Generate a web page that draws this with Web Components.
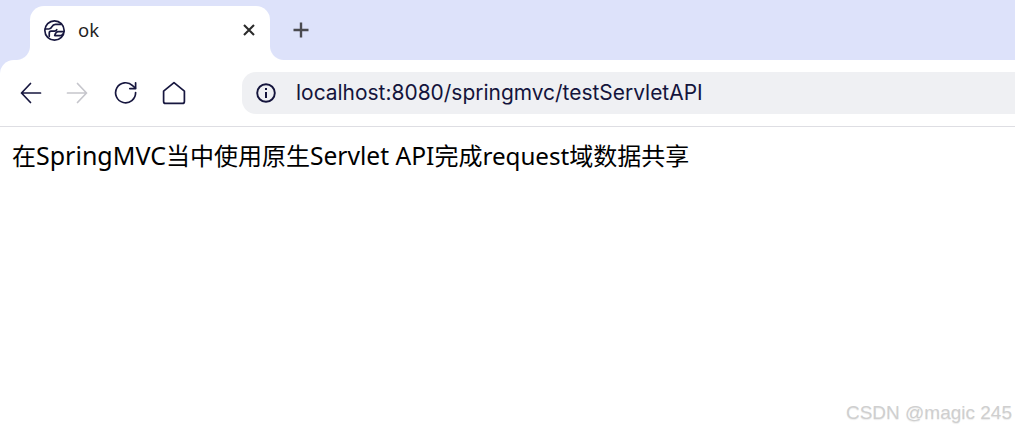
<!DOCTYPE html>
<html>
<head>
<meta charset="utf-8">
<style>
  html, body { margin: 0; padding: 0; background: #fff; overflow: hidden; }
  body { width: 1015px; height: 430px; position: relative; }
  page-body span { font-size: 25px; }
  page-body span.mid { font-size: 24.6px; }
  page-body span.req { font-size: 24.2px; }
</style>
</head>
<body>
<browser-window>
  <tab-strip slot="strip" title-text="ok"></tab-strip>
  <nav-toolbar slot="toolbar" url="localhost:8080/springmvc/testServletAPI"></nav-toolbar>
  <page-body>在<span>SpringMVC</span>当中使用原生<span class="mid">Servlet API</span>完成<span class="req">request</span>域数据共享</page-body>
</browser-window>
<water-mark>CSDN @magic 245</water-mark>

<script>
class BrowserWindow extends HTMLElement {
  constructor() {
    super();
    this.attachShadow({ mode: "open" });
    this.shadowRoot.innerHTML = `
      <style>
        :host { display: flex; flex-direction: column; width: 1015px; height: 430px; }
      </style>
      <slot name="strip"></slot>
      <slot name="toolbar"></slot>
      <slot></slot>
    `;
  }
}

class TabStrip extends HTMLElement {
  constructor() {
    super();
    this.attachShadow({ mode: "open" });
    this.shadowRoot.innerHTML = `
      <style>
        :host { display: flex; height: 60px; box-sizing: border-box; padding: 6px 0 0 30px; background: #dde2fa; align-items: stretch; }
        #tab {
          position: relative; width: 240px; box-sizing: border-box; background: #fff;
          border-radius: 14px 14px 0 0; display: flex; align-items: center; padding: 0 14px 6px;
        }
        #tab::before, #tab::after {
          content: ""; position: absolute; bottom: 0; width: 14px; height: 14px;
          background: radial-gradient(circle at var(--cx) 0, #dde2fa 13.5px, #fff 14.5px);
        }
        #tab::before { left: -14px; --cx: 0; }
        #tab::after { right: -14px; --cx: 100%; }
        #fav { width: 21px; height: 21px; flex: none; }
        #title { margin-left: 13px; flex: 1; font: 18.5px/24px "Noto Sans", sans-serif; color: #1f1f1f; }
        #close { width: 14px; height: 14px; flex: none; }
        #plus { width: 16px; height: 16px; flex: none; margin: 16px 0 0 23px; }
      </style>
      <div id="tab">
        <svg id="fav" viewBox="0 0 20 20" fill="none" stroke="#17173f" stroke-width="1.6" stroke-linecap="round" stroke-linejoin="round">
          <circle cx="10" cy="10" r="9.2"/>
          <path d="M1 8.6 H4.6 Q6.6 8.6 7.6 6.4 Q8.6 4.2 11 4.2 H15.6"/>
          <path d="M5 15.4 V12.4 Q5 10.6 6.8 10.6 H10 Q11.6 10.6 12.2 9.2"/>
          <path d="M19 11 H13.6 Q11.2 11 10.2 14.8 H15.6 Q17.4 14.8 17.8 13.4"/>
        </svg>
        <span id="title"></span>
        <svg id="close" viewBox="0 0 14 14" stroke="#2b2b2b" stroke-width="2.1" fill="none">
          <path d="M2 2 L12 12 M12 2 L2 12"/>
        </svg>
      </div>
      <svg id="plus" viewBox="0 0 16 16" stroke="#4a4a4f" stroke-width="2.4" fill="none">
        <path d="M8 0.5 V15.5 M0.5 8 H15.5"/>
      </svg>
    `;
  }
  connectedCallback() {
    this.shadowRoot.getElementById("title").textContent = this.getAttribute("title-text");
  }
}

class NavToolbar extends HTMLElement {
  constructor() {
    super();
    this.attachShadow({ mode: "open" });
    this.shadowRoot.innerHTML = `
      <style>
        :host { display: block; background: #dde2fa; }
        #bar {
          height: 67px; box-sizing: border-box; background: #fff; border-radius: 14px 0 0 0;
          border-bottom: 1px solid #dedee3; display: flex; align-items: center; padding: 0 0 1px 20px;
        }
        svg { flex: none; display: block; }
        #back { width: 22px; height: 22px; }
        #fwd { width: 22px; height: 22px; margin-left: 24px; }
        #reload { width: 24px; height: 24px; margin-left: 26px; }
        #home { width: 24px; height: 24px; margin-left: 24px; }
        #pill {
          margin-left: 56px; flex: 1; height: 42px; border-radius: 14px 0 0 14px; background: #eff0f3;
          display: flex; align-items: center; padding-left: 14px;
        }
        #info { width: 20px; height: 20px; }
        #url { margin-left: 20px; font: 20.95px Inter, sans-serif; color: #14143c; white-space: nowrap; }
      </style>
      <div id="bar">
        <svg id="back" viewBox="0 0 22 22" fill="none" stroke="#17173f" stroke-width="1.7" stroke-linecap="round" stroke-linejoin="round">
          <path d="M1.5 11 H20.5 M10.5 1.5 L1.5 11 L10.5 20.5"/>
        </svg>
        <svg id="fwd" viewBox="0 0 22 22" fill="none" stroke="#c6c6cc" stroke-width="1.7" stroke-linecap="round" stroke-linejoin="round">
          <path d="M1.5 11 H20.5 M11.5 1.5 L20.5 11 L11.5 20.5"/>
        </svg>
        <svg id="reload" viewBox="0 0 24 24" fill="none" stroke="#17173f" stroke-width="1.7" stroke-linecap="round" stroke-linejoin="round">
          <path d="M21.6 11.5 A10 10 0 1 1 18.6 4.6 L21.4 7.2"/>
          <path d="M21.6 1.8 V7.6 H15.8"/>
        </svg>
        <svg id="home" viewBox="0 0 24 24" fill="none" stroke="#17173f" stroke-width="1.7" stroke-linejoin="round">
          <path d="M12 1.6 L22.4 10.2 V20.4 Q22.4 22.4 20.4 22.4 H3.6 Q1.6 22.4 1.6 20.4 V10.2 Z"/>
        </svg>
        <div id="pill">
          <svg id="info" viewBox="0 0 20 20" fill="none" stroke="#14143c" stroke-width="1.9">
            <circle cx="10" cy="10" r="8.8"/>
            <path d="M10 9 V15" stroke-width="2"/>
            <path d="M10 5 V7" stroke-width="2"/>
          </svg>
          <span id="url"></span>
        </div>
      </div>
    `;
  }
  connectedCallback() {
    this.shadowRoot.getElementById("url").textContent = this.getAttribute("url");
  }
}

class PageBody extends HTMLElement {
  constructor() {
    super();
    this.attachShadow({ mode: "open" });
    this.shadowRoot.innerHTML = `
      <style>
        :host {
          display: block; padding: 11px 12px; color: #000;
          font: 24px/34px "Noto Sans", "Noto Sans CJK SC", sans-serif;
        }
      </style>
      <slot></slot>
    `;
  }
}

class WaterMark extends HTMLElement {
  constructor() {
    super();
    this.attachShadow({ mode: "open" });
    this.shadowRoot.innerHTML = `
      <style>
        :host {
          position: absolute; right: 3px; top: 401px; color: #cfcfcf;
          font: 19px/24px "Liberation Sans", sans-serif; white-space: nowrap;
          text-shadow: 0 1px 1px #ececec;
        }
      </style>
      <slot></slot>
    `;
  }
}

customElements.define("browser-window", BrowserWindow);
customElements.define("tab-strip", TabStrip);
customElements.define("nav-toolbar", NavToolbar);
customElements.define("page-body", PageBody);
customElements.define("water-mark", WaterMark);
</script>
</body>
</html>
